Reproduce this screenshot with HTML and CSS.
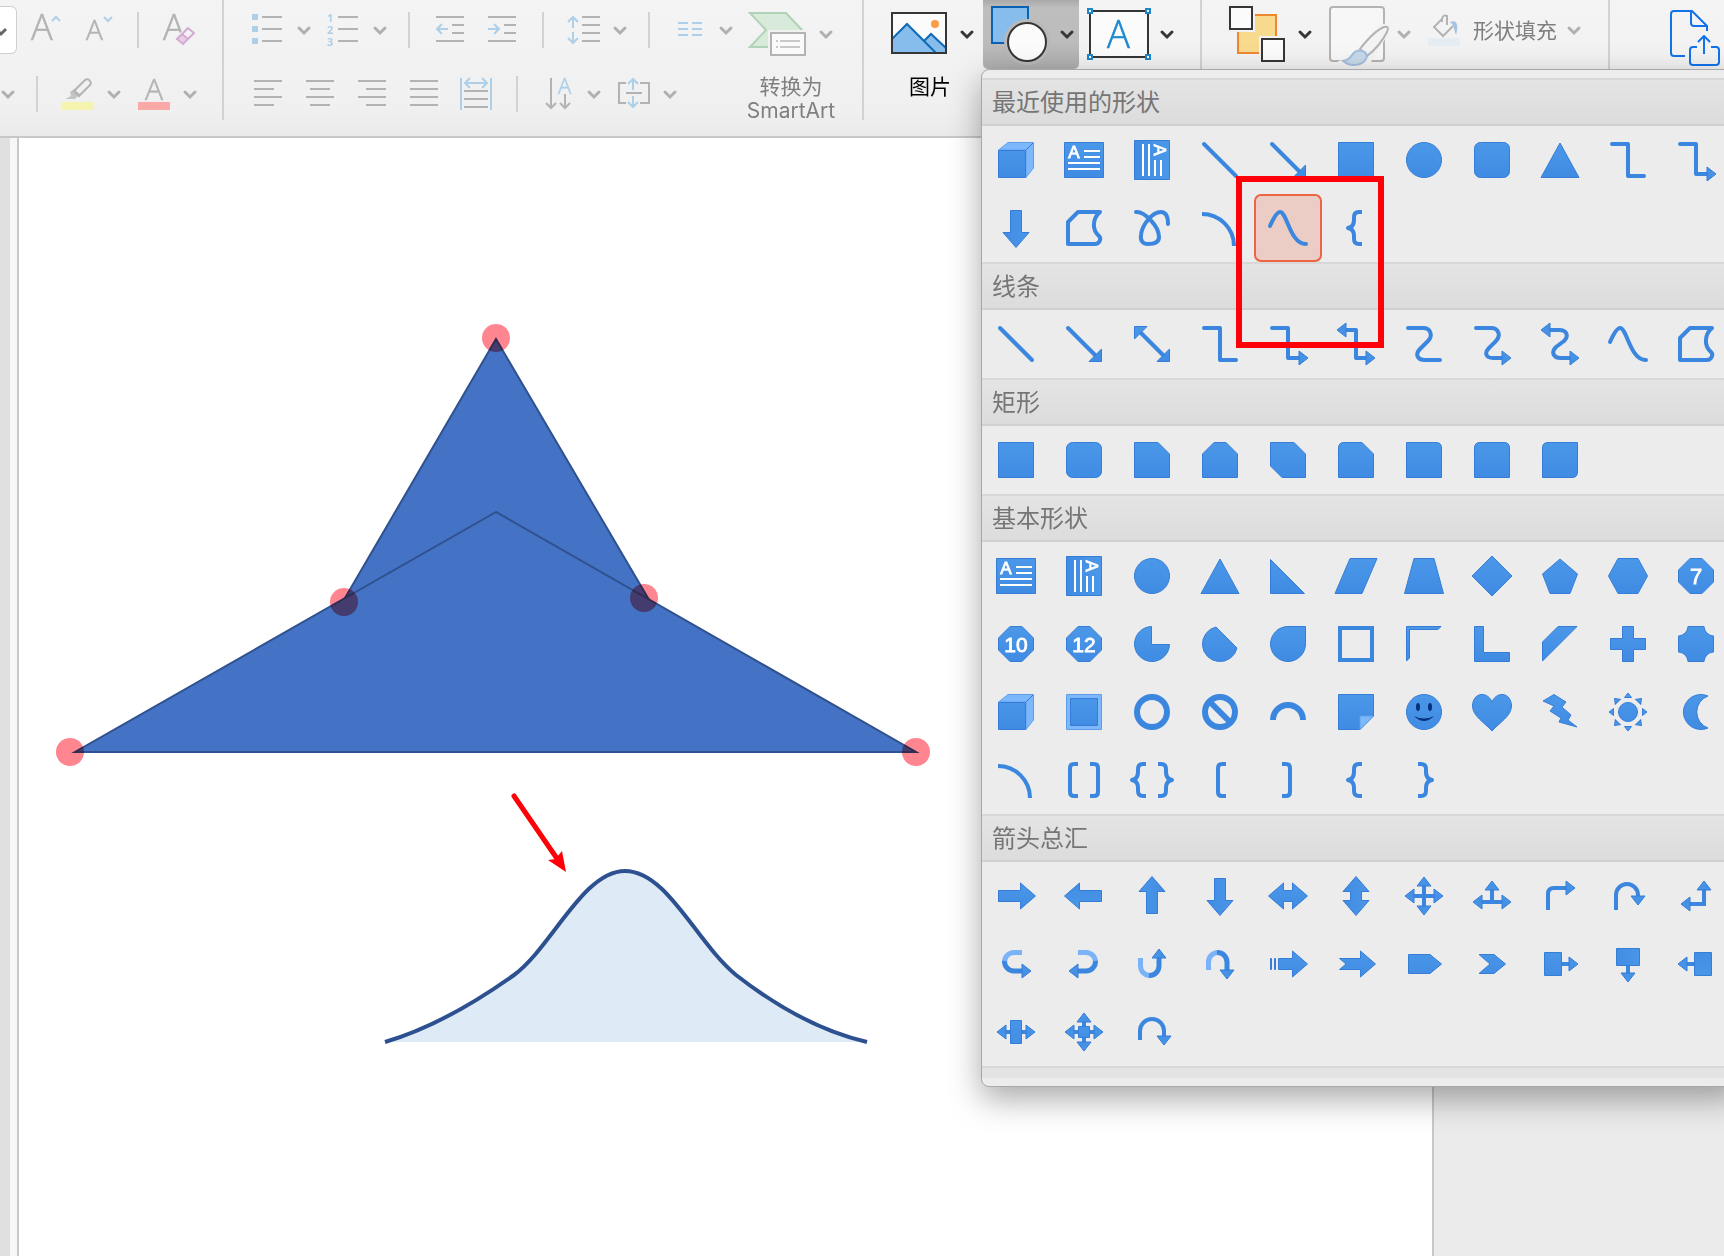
FILE: index.html
```html
<!DOCTYPE html>
<html lang="zh-CN">
<head>
<meta charset="utf-8">
<meta name="viewport" content="width=device-width, initial-scale=1">
<title>演示文稿</title>
<link rel="stylesheet" href="styles.css">
</head>
<body>
<svg class="defs" width="0" height="0" aria-hidden="true">
  <defs>
    <linearGradient id="blue" gradientUnits="userSpaceOnUse" x1="0" y1="-18" x2="0" y2="18"><stop offset="0" stop-color="#4b98e9"/><stop offset="1" stop-color="#408be3"/></linearGradient>
    <path id="head" d="M0 0L-9 -7V7Z"/>
    <path id="chev" d="M-5 -3L0 2L5 -3"/>
    <g id="brace"><path class="ln" d="M6 -16H3Q-2 -16 -2 -11V-8Q-2 -3 -5 -1L-8 0L-5 1Q-2 3 -2 8V11Q-2 16 3 16H6"/></g>
    <g id="bracket"><path class="ln" d="M6 -16H2Q-2 -16 -2 -12V12Q-2 16 2 16H6"/></g>
    <g id="cube"><path class="lt" d="M-17.500 -10L-8 -17.500H17.500V8L10 17.500V-10Z"/><path d="M-17.500 -9.500H9.500V17.500H-17.500Z"/><path class="edge" d="M10 -10L17 -17"/></g>
    <g id="textbox"><path d="M-19.500 -17.500H19.500V17.500H-19.500Z"/><path class="wh" d="M0 -9H16M0 -3H16M-16 3H16M-16 9H16"/><text class="num" x="-10" y="-2" font-size="17">A</text></g>
    <g id="turn"><path class="ln bold ltl" d="M6 -11.500H-2A9.500 9.500 0 0 0 -11.500 -2"/><path class="ln bold" d="M-11.500 -3A9.500 9.500 0 0 0 -2 7H6"/><use href="#head" x="15" y="7"/></g>
    <g id="callout"><path d="M-15.500 -11.500H1.500V11.500H-15.500Z"/><path class="ln" d="M2 0H10"/><use href="#head" x="18"/></g>
    <path id="ray" d="M0 -19L3.500 -14.500H-3.500Z"/>
    <path id="oct" d="M-6 -17.500H6L17.500 -6V6L6 17.500H-6L-17.500 6V-6Z"/>
    <path id="arrow" d="M-17.500 -5.500H4.500V-13L19.500 0L4.500 13V5.500H-17.500Z"/>
    <path id="arrow2" d="M-19.500 0L-4.500 -13V-5.500H4.500V-13L19.500 0L4.500 13V5.500H-4.500V13Z"/>
    <path id="curve" class="ln rd" d="M-18 -2C-14 -11 -11 -16 -8 -16C-1 -16 2 16 18 16"/>
    <path id="freeform" class="ln" d="M-16 -6L-6 -16H16C8 -9 8 2 15 8C18 11 15 16 11 16H-16Z"/>
    <path id="arc" class="ln" d="M-18 -14A32 32 0 0 1 14 18"/>
    <g id="line-arrow"><path class="ln rd" d="M-16 -16L12 12"/><path d="M17.500 5V17.500H5Z"/></g>
    <g id="elbow-arrow"><path class="ln rd" d="M-16 -16H0V14H11"/><use href="#head" x="20" y="14"/></g>
    <path id="elbow" class="ln rd" d="M-16 -16H0V16H16"/>
  </defs>
</svg>

<header class="ribbon">
  <div class="group rows">
    <div class="row">
      <select class="size" aria-label="字号"><option>18</option></select>
      <button class="tool" aria-label="增大字号"><svg width="56" height="60" viewBox="16 0 56 60"><text class="glyph" x="30" y="40" font-size="36">A</text><path class="b" d="M51 21L55 17L59 21"/></svg></button>
      <button class="tool" aria-label="减小字号"><svg width="50" height="60" viewBox="72 0 50 60"><text class="glyph" x="85" y="40" font-size="28">A</text><path class="b" d="M103 17L107 21L111 17"/></svg></button>
      <span class="sep"></span>
      <button class="tool" aria-label="清除格式"><svg width="50" height="60" viewBox="152 0 50 60"><text class="glyph" x="162" y="40" font-size="36">A</text><path class="plate" d="M174 38L187 25L196 34L183 47Z"/><path d="M176 39L181 34L187 40L182 45Z" fill="#e6cfe6"/><path d="M176 39L187 28L193 33L182 44Z M181 34L187 39" fill="none" stroke="#d5a9d6" stroke-width="2"/></svg></button>
    </div>
    <div class="row">
      <button class="tool" aria-label="更多"><svg width="22" height="60" viewBox="-6 -31 22 60"><use class="c" href="#chev" x="2"/></svg></button>
      <span class="sep"></span>
      <button class="tool" aria-label="突出显示"><svg width="48" height="60" viewBox="52 64 48 60"><path d="M62 102H94V110H62Z" fill="#f5f3b0"/><path d="M65 99L71 96L70 92L74 89L80 94L75 99Z" fill="#c4c4c4"/><path class="g" d="M74 91L85 80Q88 78 90 81Q92 84 89 86L79 96Z"/></svg></button>
      <button class="tool" aria-label="突出显示颜色"><svg width="28" height="60" viewBox="-14 -31 28 60"><use class="c" href="#chev"/></svg></button>
      <button class="tool" aria-label="字体颜色"><svg width="48" height="60" viewBox="128 64 48 60"><path d="M138 102H170V110H138Z" fill="#fba9a7"/><text class="glyph" x="145" y="100" font-size="30">A</text></svg></button>
      <button class="tool" aria-label="字体颜色选项"><svg width="28" height="60" viewBox="-14 -31 28 60"><use class="c" href="#chev"/></svg></button>
    </div>
  </div>
  <div class="group rows paragraph">
    <div class="row">
      <button class="tool" aria-label="项目符号"><svg width="48" height="60" viewBox="242 0 48 60"><path d="M252 14h6v6h-6zM252 26h6v6h-6zM252 38h6v6h-6z" fill="#aecfe8"/><path class="g" d="M262 17H282M262 29H282M262 41H282"/></svg></button>
      <button class="tool" aria-label="项目符号选项"><svg width="28" height="60" viewBox="-14 -31 28 60"><use class="c" href="#chev"/></svg></button>
      <button class="tool" aria-label="编号"><svg width="48" height="60" viewBox="318 0 48 60"><g class="digits"><text x="327" y="22">1</text><text x="327" y="34">2</text><text x="327" y="46">3</text></g><path class="g" d="M338 17H358M338 29H358M338 41H358"/></svg></button>
      <button class="tool" aria-label="编号选项"><svg width="28" height="60" viewBox="-14 -31 28 60"><use class="c" href="#chev"/></svg></button>
      <span class="sep"></span>
      <button class="tool" aria-label="减少缩进"><svg width="52" height="60" viewBox="424 0 52 60"><path class="g" d="M436 17H464M452 25H464M452 33H464M436 41H464"/><path class="b" d="M448 29H437M442 24L437 29L442 34"/></svg></button>
      <button class="tool" aria-label="增加缩进"><svg width="52" height="60" viewBox="476 0 52 60"><path class="g" d="M488 17H516M504 25H516M504 33H516M488 41H516"/><path class="b" d="M488 29H499M494 24L499 29L494 34"/></svg></button>
      <span class="sep"></span>
      <button class="tool" aria-label="行距"><svg width="48" height="60" viewBox="558 0 48 60"><path class="g" d="M582 17H600M582 25H600M582 33H600M582 41H600"/><path class="b" d="M573 28V17M568 22L573 17L578 22M573 32V43M568 38L573 43L578 38"/></svg></button>
      <button class="tool" aria-label="行距选项"><svg width="28" height="60" viewBox="-14 -31 28 60"><use class="c" href="#chev"/></svg></button>
      <span class="sep"></span>
      <button class="tool" aria-label="分栏"><svg width="48" height="60" viewBox="664 0 48 60"><path class="b" d="M678 23H688M692 23H702M678 29H688M692 29H702M678 35H688M692 35H702"/></svg></button>
      <button class="tool" aria-label="分栏选项"><svg width="28" height="60" viewBox="-14 -31 28 60"><use class="c" href="#chev"/></svg></button>
    </div>
    <div class="row">
      <button class="tool" aria-label="左对齐"><svg width="52" height="60" viewBox="242 64 52 60"><path class="g" d="M254 81H282M254 89H274M254 97H282M254 105H274"/></svg></button>
      <button class="tool" aria-label="居中"><svg width="52" height="60" viewBox="294 64 52 60"><path class="g" d="M306 81H334M310 89H330M306 97H334M310 105H330"/></svg></button>
      <button class="tool" aria-label="右对齐"><svg width="52" height="60" viewBox="346 64 52 60"><path class="g" d="M358 81H386M366 89H386M358 97H386M366 105H386"/></svg></button>
      <button class="tool" aria-label="两端对齐"><svg width="52" height="60" viewBox="398 64 52 60"><path class="g" d="M410 81H438M410 89H438M410 97H438M410 105H438"/></svg></button>
      <button class="tool" aria-label="分散对齐"><svg width="52" height="60" viewBox="450 64 52 60"><path class="g" d="M464 91H488M464 99H488M464 107H488"/><path class="b" d="M461 78V110M491 78V110M466 83H486M470 78L465 83L470 88M482 78L487 83L482 88"/></svg></button>
      <span class="sep"></span>
      <button class="tool" aria-label="文字方向"><svg width="48" height="60" viewBox="532 64 48 60"><path class="g" d="M551 78V108M546 103L551 108L556 103M565 94V108M560 103L565 108L570 103"/><text class="glyph sky" x="558" y="94" font-size="22">A</text></svg></button>
      <button class="tool" aria-label="文字方向选项"><svg width="28" height="60" viewBox="-14 -31 28 60"><use class="c" href="#chev"/></svg></button>
      <button class="tool" aria-label="对齐文本"><svg width="48" height="60" viewBox="608 64 48 60"><path class="g" d="M626 83H619V103H626M640 83H649V103H640M626 93H642"/><path class="b" d="M633 90V79M628 84L633 79L638 84M633 96V107M628 102L633 107L638 102"/></svg></button>
      <button class="tool" aria-label="对齐文本选项"><svg width="28" height="60" viewBox="-14 -31 28 60"><use class="c" href="#chev"/></svg></button>
    </div>
  </div>
  <div class="group smartart">
    <button class="big muted"><svg width="102" height="75" viewBox="740 0 102 75"><path d="M750 13H786L802 30L786 47H750L766 30Z" fill="#d8ebda" stroke="#b0d2b6" stroke-width="2"/><path class="plate" d="M768 30H808V58H768Z"/><path d="M771 33H805V55H771Z" fill="#fafafa" stroke="#b3b3b3" stroke-width="2"/><path d="M780 41H800M780 47H800M776 41h2M776 47h2" stroke="#c8c8c8" stroke-width="2"/><use class="c" href="#chev" x="826" y="35"/></svg>转换为<br>SmartArt</button>
  </div>
  <div class="group insert">
    <button class="big"><svg width="92" height="75" viewBox="884 0 92 75"><path d="M892 13H946V53H892Z" fill="#fbfbfb"/><path d="M892 39L907 24L936 53H892Z" fill="#86bdec"/><path d="M924 41L931 34L946 48V53H936Z" fill="#86bdec"/><path d="M892 39L907 24L936 53M924 41L931 34L946 48" fill="none" stroke="#0f6ab8" stroke-width="2"/><circle cx="935" cy="24" r="4" fill="#fb9b45"/><path class="d" d="M892 13H946V53H892Z"/><use class="c k" href="#chev" x="967" y="35"/></svg>图片</button>
    <div class="dropdown">
      <button class="tool open" aria-label="形状" aria-expanded="true"><svg width="96" height="69" viewBox="983 0 96 69"><path d="M992 7H1028V43H992Z" fill="#86bdec" stroke="#0a62b3" stroke-width="2"/><circle cx="1027" cy="42" r="23" fill="#b9b9b9"/><circle cx="1027" cy="42" r="19" fill="#fbfbfb" stroke="#363636" stroke-width="2"/><use class="c k" href="#chev" x="1067" y="35"/></svg></button>
      <div class="menu">
        <h2>最近使用的形状</h2>
        <div class="grid">
          <button aria-label="立方体"><svg viewBox="-34 -34 68 68"><use href="#cube"/></svg></button>
          <button aria-label="文本框"><svg viewBox="-34 -34 68 68"><use href="#textbox"/></svg></button>
          <button aria-label="竖排文本框"><svg viewBox="-34 -34 68 68"><use href="#textbox" transform="rotate(90)"/></svg></button>
          <button aria-label="直线"><svg viewBox="-34 -34 68 68"><path class="ln rd" d="M-16 -16L16 16"/></svg></button>
          <button aria-label="箭头"><svg viewBox="-34 -34 68 68"><use href="#line-arrow"/></svg></button>
          <button aria-label="矩形"><svg viewBox="-34 -34 68 68"><path d="M-17.500 -17.500H17.500V17.500H-17.500Z"/></svg></button>
          <button aria-label="椭圆"><svg viewBox="-34 -34 68 68"><circle r="17.500"/></svg></button>
          <button aria-label="圆角矩形"><svg viewBox="-34 -34 68 68"><rect x="-17.500" y="-17.500" width="35" height="35" rx="6"/></svg></button>
          <button aria-label="三角形"><svg viewBox="-34 -34 68 68"><path d="M0 -17L19 17.500H-19Z"/></svg></button>
          <button aria-label="肘形连接符"><svg viewBox="-34 -34 68 68"><use href="#elbow"/></svg></button>
          <button aria-label="肘形箭头"><svg viewBox="-34 -34 68 68"><use href="#elbow-arrow"/></svg></button>
          <button aria-label="下箭头"><svg viewBox="-34 -34 68 68"><use href="#arrow" transform="rotate(90)"/></svg></button>
          <button aria-label="任意多边形"><svg viewBox="-34 -34 68 68"><use href="#freeform"/></svg></button>
          <button aria-label="自由曲线"><svg viewBox="-34 -34 68 68"><path class="ln rd" d="M-16 -16C-8 -17 7 -2 7 9C7 14 2 16 -4 16C-9 16 -12 13 -11 7C-10 -3 0 -16 9 -16C15 -16 16 -10 16 -4"/></svg></button>
          <button aria-label="弧形"><svg viewBox="-34 -34 68 68"><use href="#arc"/></svg></button>
          <button class="selected" aria-label="曲线"><svg viewBox="-34 -34 68 68"><use href="#curve"/></svg></button>
          <button aria-label="左大括号"><svg viewBox="-34 -34 68 68"><use href="#brace"/></svg></button>
        </div>
        <h2>线条</h2>
        <div class="grid">
          <button aria-label="直线"><svg viewBox="-34 -34 68 68"><path class="ln rd" d="M-16 -16L16 16"/></svg></button>
          <button aria-label="箭头"><svg viewBox="-34 -34 68 68"><use href="#line-arrow"/></svg></button>
          <button aria-label="双箭头"><svg viewBox="-34 -34 68 68"><path class="ln" d="M-12 -12L12 12"/><path d="M17.500 5V17.500H5ZM-17.500 -5V-17.500H-5Z"/></svg></button>
          <button aria-label="肘形连接符"><svg viewBox="-34 -34 68 68"><use href="#elbow"/></svg></button>
          <button aria-label="肘形箭头"><svg viewBox="-34 -34 68 68"><use href="#elbow-arrow"/></svg></button>
          <button aria-label="肘形双箭头"><svg viewBox="-34 -34 68 68"><path class="ln" d="M-11 -14H0V14H11"/><use href="#head" x="19" y="14"/><use href="#head" x="19" y="14" transform="rotate(180)"/></svg></button>
          <button aria-label="曲线连接符"><svg viewBox="-34 -34 68 68"><path class="ln rd" d="M-16 -16H-1C7 -16 9 -8 4 -3L-4 5C-9 10 -7 16 1 16H16"/></svg></button>
          <button aria-label="曲线箭头"><svg viewBox="-34 -34 68 68"><path class="ln rd" d="M-16 -16H-1C7 -16 9 -8 4 -3L-3 4C-8 9 -6 14 1 14H11"/><use href="#head" x="19" y="14"/></svg></button>
          <button aria-label="曲线双箭头"><svg viewBox="-34 -34 68 68"><path class="ln" d="M-11 -14H-1C7 -14 9 -8 4 -3L-4 3C-9 8 -7 14 1 14H11"/><use href="#head" x="19" y="14"/><use href="#head" x="19" y="14" transform="rotate(180)"/></svg></button>
          <button aria-label="曲线"><svg viewBox="-34 -34 68 68"><use href="#curve"/></svg></button>
          <button aria-label="任意多边形"><svg viewBox="-34 -34 68 68"><use href="#freeform"/></svg></button>
        </div>
        <h2>矩形</h2>
        <div class="grid">
          <button aria-label="矩形"><svg viewBox="-34 -34 68 68"><path d="M-17.500 -17.500H17.500V17.500H-17.500Z"/></svg></button>
          <button aria-label="圆角矩形"><svg viewBox="-34 -34 68 68"><rect x="-17.500" y="-17.500" width="35" height="35" rx="6"/></svg></button>
          <button aria-label="剪去单角"><svg viewBox="-34 -34 68 68"><path d="M-17.500 -17.500H6L17.500 -6V17.500H-17.500Z"/></svg></button>
          <button aria-label="剪去同侧角"><svg viewBox="-34 -34 68 68"><path d="M-17.500 -6L-6 -17.500H6L17.500 -6V17.500H-17.500Z"/></svg></button>
          <button aria-label="剪去对角"><svg viewBox="-34 -34 68 68"><path d="M-17.500 -17.500H6L17.500 -6V17.500H-6L-17.500 6Z"/></svg></button>
          <button aria-label="一圆一剪"><svg viewBox="-34 -34 68 68"><path d="M-17.500 -12Q-17.500 -17.500 -12 -17.500H6L17.500 -6V17.500H-17.500Z"/></svg></button>
          <button aria-label="单圆角"><svg viewBox="-34 -34 68 68"><path d="M-17.500 -17.500H12Q17.500 -17.500 17.500 -12V17.500H-17.500Z"/></svg></button>
          <button aria-label="同侧圆角"><svg viewBox="-34 -34 68 68"><path d="M-17.500 -12Q-17.500 -17.500 -12 -17.500H12Q17.500 -17.500 17.500 -12V17.500H-17.500Z"/></svg></button>
          <button aria-label="对角圆角"><svg viewBox="-34 -34 68 68"><path d="M-17.500 -12Q-17.500 -17.500 -12 -17.500H17.500V12Q17.500 17.500 12 17.500H-17.500Z"/></svg></button>
        </div>
        <h2>基本形状</h2>
        <div class="grid">
          <button aria-label="文本框"><svg viewBox="-34 -34 68 68"><use href="#textbox"/></svg></button>
          <button aria-label="竖排文本框"><svg viewBox="-34 -34 68 68"><use href="#textbox" transform="rotate(90)"/></svg></button>
          <button aria-label="椭圆"><svg viewBox="-34 -34 68 68"><circle r="17.500"/></svg></button>
          <button aria-label="三角形"><svg viewBox="-34 -34 68 68"><path d="M0 -17L19 17.500H-19Z"/></svg></button>
          <button aria-label="直角三角形"><svg viewBox="-34 -34 68 68"><path d="M-17.500 -16.500L16.500 17.500H-17.500Z"/></svg></button>
          <button aria-label="平行四边形"><svg viewBox="-34 -34 68 68"><path d="M-6 -17.500H21L6 17.500H-21Z"/></svg></button>
          <button aria-label="梯形"><svg viewBox="-34 -34 68 68"><path d="M-10 -17.500H10L19.500 17.500H-19.500Z"/></svg></button>
          <button aria-label="菱形"><svg viewBox="-34 -34 68 68"><path d="M0 -20L20 0L0 20L-20 0Z"/></svg></button>
          <button aria-label="五边形"><svg viewBox="-34 -34 68 68"><path d="M0 -17L17.500 -2L10 17.500H-10L-17.500 -2Z"/></svg></button>
          <button aria-label="六边形"><svg viewBox="-34 -34 68 68"><path d="M-10 -17.500H10L19.500 0L10 17.500H-10L-19.500 0Z"/></svg></button>
          <button aria-label="七边形"><svg viewBox="-34 -34 68 68"><use href="#oct"/><text class="num" y="8" font-size="22">7</text></svg></button>
          <button aria-label="十边形"><svg viewBox="-34 -34 68 68"><use href="#oct"/><text class="num" y="8" font-size="21">10</text></svg></button>
          <button aria-label="十二边形"><svg viewBox="-34 -34 68 68"><use href="#oct"/><text class="num" y="8" font-size="21">12</text></svg></button>
          <button aria-label="饼形"><svg viewBox="-34 -34 68 68"><path d="M-.5 -17.500V.5H17.500A17.500 17.500 0 1 1 -.5 -17.500Z"/></svg></button>
          <button aria-label="弦形"><svg viewBox="-34 -34 68 68"><path d="M-4 -17L17 4A17.500 17.500 0 1 1 -4 -17Z"/></svg></button>
          <button aria-label="泪滴形"><svg viewBox="-34 -34 68 68"><path d="M0 -17.500H17.500V0A17.500 17.500 0 1 1 0 -17.500Z"/></svg></button>
          <button aria-label="图文框"><svg viewBox="-34 -34 68 68"><path class="ln sq" d="M-16 -16H16V16H-16Z"/></svg></button>
          <button aria-label="半闭框"><svg viewBox="-34 -34 68 68"><path d="M-17.500 -17.500H17L14 -14.500H-14.500V14L-17.500 17Z"/></svg></button>
          <button aria-label="L 形"><svg viewBox="-34 -34 68 68"><path d="M-17.500 -17.500H-8.500V8.500H17.500V17.500H-17.500Z"/></svg></button>
          <button aria-label="斜纹"><svg viewBox="-34 -34 68 68"><path d="M-17.500 -2L-2 -17.500H17L-17.500 17Z"/></svg></button>
          <button aria-label="十字形"><svg viewBox="-34 -34 68 68"><path d="M-5.500 -17.500H5.500V-5.500H17.500V5.500H5.500V17.500H-5.500V5.500H-17.500V-5.500H-5.500Z"/></svg></button>
          <button aria-label="缺角矩形"><svg viewBox="-34 -34 68 68"><path d="M-8 -17.500H8A10 10 0 0 0 17.500 -8V8A10 10 0 0 0 8 17.500H-8A10 10 0 0 0 -17.500 8V-8A10 10 0 0 0 -8 -17.500Z"/></svg></button>
          <button aria-label="立方体"><svg viewBox="-34 -34 68 68"><use href="#cube"/></svg></button>
          <button aria-label="棱台"><svg viewBox="-34 -34 68 68"><path class="lt" d="M-17.500 -17.500H17.500V17.500H-17.500Z"/><path d="M-13.500 -13.500H13.500V13.500H-13.500Z"/></svg></button>
          <button aria-label="圆环"><svg viewBox="-34 -34 68 68"><circle class="ln thick" r="15"/></svg></button>
          <button aria-label="禁止符"><svg viewBox="-34 -34 68 68"><circle class="ln thick" r="15"/><path class="ln thick" d="M-9 -9L9 9"/></svg></button>
          <button aria-label="空心弧"><svg viewBox="-34 -34 68 68"><path class="ln thick" d="M-15 8A15 15 0 0 1 15 8"/></svg></button>
          <button aria-label="折角形"><svg viewBox="-34 -34 68 68"><path d="M-17.500 -17.500H17.500V4L4 17.500H-17.500Z"/><path class="lt" d="M4 17.500V4H17.500Z"/></svg></button>
          <button aria-label="笑脸"><svg viewBox="-34 -34 68 68"><circle r="17.500"/><path class="face" d="M-10 4Q0 14 10 4Q0 9 -10 4Z"/><ellipse class="face" cx="-6" cy="-5" rx="2" ry="4"/><ellipse class="face" cx="6" cy="-5" rx="2" ry="4"/></svg></button>
          <button aria-label="心形"><svg viewBox="-34 -34 68 68"><path d="M0 -10C2 -15 6 -17.500 10 -17.500C16 -17.500 19.500 -12 19.500 -6C19.500 4 7 11 0 19C-7 11 -19.500 4 -19.500 -6C-19.500 -12 -16 -17.500 -10 -17.500C-6 -17.500 -2 -15 0 -10Z"/></svg></button>
          <button aria-label="闪电形"><svg viewBox="-34 -34 68 68"><path d="M-6 -17.500L6 -10L2 -5L11 3L8 8L17 15L-1 10L1 6L-10 -1L-6 -6L-17 -11Z"/></svg></button>
          <button aria-label="太阳形"><svg viewBox="-34 -34 68 68"><circle r="9.500"/><use href="#ray"/><use href="#ray" transform="rotate(45)"/><use href="#ray" transform="rotate(90)"/><use href="#ray" transform="rotate(135)"/><use href="#ray" transform="rotate(180)"/><use href="#ray" transform="rotate(225)"/><use href="#ray" transform="rotate(270)"/><use href="#ray" transform="rotate(315)"/></svg></button>
          <button aria-label="新月形"><svg viewBox="-34 -34 68 68"><path d="M12 -16A17.500 17.500 0 1 0 12 16A17 17 0 0 1 12 -16Z"/></svg></button>
          <button aria-label="弧形"><svg viewBox="-34 -34 68 68"><use href="#arc"/></svg></button>
          <button aria-label="双括号"><svg viewBox="-34 -34 68 68"><use href="#bracket" x="-12"/><use href="#bracket" x="-12" transform="rotate(180)"/></svg></button>
          <button aria-label="双大括号"><svg viewBox="-34 -34 68 68"><use href="#brace" x="-12"/><use href="#brace" x="-12" transform="rotate(180)"/></svg></button>
          <button aria-label="左中括号"><svg viewBox="-34 -34 68 68"><use href="#bracket"/></svg></button>
          <button aria-label="右中括号"><svg viewBox="-34 -34 68 68"><use href="#bracket" transform="rotate(180)"/></svg></button>
          <button aria-label="左大括号"><svg viewBox="-34 -34 68 68"><use href="#brace"/></svg></button>
          <button aria-label="右大括号"><svg viewBox="-34 -34 68 68"><use href="#brace" transform="rotate(180)"/></svg></button>
        </div>
        <h2>箭头总汇</h2>
        <div class="grid">
          <button aria-label="右箭头"><svg viewBox="-34 -34 68 68"><use href="#arrow"/></svg></button>
          <button aria-label="左箭头"><svg viewBox="-34 -34 68 68"><use href="#arrow" transform="rotate(180)"/></svg></button>
          <button aria-label="上箭头"><svg viewBox="-34 -34 68 68"><use href="#arrow" transform="rotate(-90)"/></svg></button>
          <button aria-label="下箭头"><svg viewBox="-34 -34 68 68"><use href="#arrow" transform="rotate(90)"/></svg></button>
          <button aria-label="左右箭头"><svg viewBox="-34 -34 68 68"><use href="#arrow2"/></svg></button>
          <button aria-label="上下箭头"><svg viewBox="-34 -34 68 68"><use href="#arrow2" transform="rotate(90)"/></svg></button>
          <button aria-label="十字箭头"><svg viewBox="-34 -34 68 68"><path class="ln" d="M-11 0H11M0 -11V11"/><use href="#head" x="19"/><use href="#head" x="19" transform="rotate(90)"/><use href="#head" x="19" transform="rotate(180)"/><use href="#head" x="19" transform="rotate(270)"/></svg></button>
          <button aria-label="丁字箭头"><svg viewBox="-34 -34 68 68"><path class="ln" d="M-11 6H11M0 -7V6"/><use href="#head" x="19" y="6"/><use href="#head" x="19" y="-6" transform="rotate(180)"/><use href="#head" x="15" transform="rotate(-90)"/></svg></button>
          <button aria-label="圆角右箭头"><svg viewBox="-34 -34 68 68"><path class="ln" d="M-12 14V-2Q-12 -8 -6 -8H7"/><use href="#head" x="15" y="-8"/></svg></button>
          <button aria-label="手杖形箭头"><svg viewBox="-34 -34 68 68"><path class="ln" d="M-12 14V-1A11 11 0 0 1 10 -1V1"/><use href="#head" x="9" y="-10" transform="rotate(90)"/></svg></button>
          <button aria-label="直角双向箭头"><svg viewBox="-34 -34 68 68"><path class="ln sq" d="M-7 8H8V-7"/><use href="#head" x="15" y="-8" transform="rotate(180)"/><use href="#head" x="15" y="8" transform="rotate(-90)"/></svg></button>
          <button aria-label="左弧形箭头"><svg viewBox="-34 -34 68 68"><use href="#turn"/></svg></button>
          <button aria-label="右弧形箭头"><svg viewBox="-34 -34 68 68"><use href="#turn" transform="scale(-1 1)"/></svg></button>
          <button aria-label="下弧形箭头"><svg viewBox="-34 -34 68 68"><use href="#turn" transform="rotate(-90)"/></svg></button>
          <button aria-label="上弧形箭头"><svg viewBox="-34 -34 68 68"><use href="#turn" transform="scale(1 -1) rotate(-90)"/></svg></button>
          <button aria-label="虚尾箭头"><svg viewBox="-34 -34 68 68"><path d="M-9.500 -5.500H4.500V-13L19.500 0L4.500 13V5.500H-9.500ZM-17.500 -5.500h1v11h-1zM-13.500 -5.500h1v11h-1z"/></svg></button>
          <button aria-label="燕尾形箭头"><svg viewBox="-34 -34 68 68"><path d="M-16.500 -5.500H4.500V-13L19.500 0L4.500 13V5.500H-16.500L-10 0Z"/></svg></button>
          <button aria-label="五边形箭头"><svg viewBox="-34 -34 68 68"><path d="M-15.500 -9.500H6L17.500 0L6 9.500H-15.500Z"/></svg></button>
          <button aria-label="V 形"><svg viewBox="-34 -34 68 68"><path d="M-13 -9.500H2L13.500 0L2 9.500H-13L-2 0Z"/></svg></button>
          <button aria-label="右箭头标注"><svg viewBox="-34 -34 68 68"><use href="#callout"/></svg></button>
          <button aria-label="下箭头标注"><svg viewBox="-34 -34 68 68"><use href="#callout" transform="rotate(90)"/></svg></button>
          <button aria-label="左箭头标注"><svg viewBox="-34 -34 68 68"><use href="#callout" transform="rotate(180)"/></svg></button>
          <button aria-label="左右箭头标注"><svg viewBox="-34 -34 68 68"><path class="ln" d="M-11 0H11"/><path d="M-5.500 -11.500H5.500V11.500H-5.500Z"/><use href="#head" x="19"/><use href="#head" x="19" transform="rotate(180)"/></svg></button>
          <button aria-label="十字箭头标注"><svg viewBox="-34 -34 68 68"><path class="ln" d="M-11 0H11M0 -11V11"/><path d="M-5.500 -5.500H5.500V5.500H-5.500Z"/><use href="#head" x="19"/><use href="#head" x="19" transform="rotate(90)"/><use href="#head" x="19" transform="rotate(180)"/><use href="#head" x="19" transform="rotate(270)"/></svg></button>
          <button aria-label="环形箭头"><svg viewBox="-34 -34 68 68"><path class="ln" d="M-12 8V-1A11 11 0 0 1 12 -1V5"/><use href="#head" x="13" y="-12" transform="rotate(90)"/></svg></button>
        </div>
        <div class="next"></div>
        <div class="marker"></div>
      </div>
    </div>
    <button class="tool" aria-label="文本框"><svg width="108" height="69" viewBox="1079 0 108 69"><path d="M1090 11H1148V57H1090Z" fill="#fbfbfb" stroke="#363636" stroke-width="2"/><path d="M1088 9h4v4h-4zM1146 9h4v4h-4zM1088 55h4v4h-4zM1146 55h4v4h-4z" fill="#fff" stroke="#1e86cc" stroke-width="2"/><text class="glyph azure" x="1107" y="48" font-size="38">A</text><use class="c k" href="#chev" x="1167" y="35"/></svg></button>
  </div>
  <div class="group arrange">
    <button class="tool" aria-label="排列"><svg width="108" height="69" viewBox="1215 0 108 69"><path d="M1238 15H1276V53H1238Z" fill="#f8da8e" stroke="#ef8731" stroke-width="2"/><path class="plate" d="M1226 4H1255V32H1226ZM1259 36H1288V64H1259Z"/><path d="M1230 7H1252V29H1230ZM1262 39H1284V61H1262Z" fill="#fbfbfb" stroke="#363636" stroke-width="2"/><use class="c k" href="#chev" x="1305" y="35"/></svg></button>
    <button class="tool" aria-label="快速样式"><svg width="97" height="69" viewBox="1323 0 97 69"><rect x="1330" y="7" width="54" height="54" rx="3" fill="#f7f7f7" stroke="#b3b3b3" stroke-width="2"/><path d="M1358 52L1381 27Q1389 24 1386 33L1368 62H1342Z" fill="#f3f3f3" stroke="#f3f3f3" stroke-width="5"/><path class="g thin" d="M1360 49Q1374 31 1384 27Q1390 26 1387 32Q1380 46 1367 56Z"/><path d="M1343 61C1353 60 1351 52 1357 51C1363 49 1369 54 1366 59C1362 66 1350 67 1343 61Z" fill="#c6d9ea" stroke="#a3bddb" stroke-width="2"/><use class="c" href="#chev" x="1404" y="35"/></svg></button>
    <button class="tool fill"><svg width="53" height="62" viewBox="1420 0 53 62"><path d="M1428 38H1460V46H1428Z" fill="#e5edf2"/><path d="M1450 22C1457 19 1459 25 1456 35C1453 28 1455 26 1450 22Z" fill="#a8c3e2"/><path class="g thin" d="M1442 19L1434 27L1443 36L1453 26M1442 22V19Q1443 14 1447 16V25"/></svg>形状填充<svg width="32" height="62" viewBox="-17 -31 32 62"><use class="c" href="#chev"/></svg></button>
  </div>
  <div class="group share">
    <button class="tool" aria-label="共享"><svg width="60" height="69" viewBox="1664 0 60 69"><g fill="none" stroke="#1272ea" stroke-width="2" stroke-linejoin="round"><path d="M1685 56H1674Q1671 56 1671 53V14Q1671 11 1674 11H1692L1707 26V31M1691 11V23Q1691 26 1694 26H1707"/><path d="M1697 47H1693Q1690 47 1690 50V62Q1690 65 1693 65H1716Q1719 65 1719 62V50Q1719 47 1716 47H1711M1704 54V36M1698 42L1704 36L1710 42"/></g></svg></button>
  </div>
</header>

<main class="work">
  <div class="thumbs"></div>
  <div class="slide">
    <svg width="1413" height="1110" viewBox="19 138 1413 1110" role="img" aria-label="三角形与曲线图形">
      <g fill="#4472c4" stroke="#2f528f" stroke-width="2">
        <path d="M496 339L345 598H648Z"/>
        <path d="M496 512L75 752H916Z"/>
      </g>
      <g class="dots"><circle cx="496" cy="338" r="14"/><circle cx="344" cy="602" r="14"/><circle cx="644" cy="598" r="14"/><circle cx="70" cy="752" r="14"/><circle cx="916" cy="752" r="14"/></g>
      <path d="M385 1042C433 1028 476 1002 514 975C552 947 583 871 625 871C667 871 696 942 736 975C772 1003 815 1030 867 1042" fill="#deebf6" stroke="#2d5190" stroke-width="4"/>
      <path d="M514 796L558 860" stroke="#ff0008" stroke-width="5" stroke-linecap="round"/>
      <path d="M566 872L548 860L556 859L557 857L562 851Z" fill="#ff0008"/>
    </svg>
  </div>
  <aside class="pane"></aside>
</main>
</body>
</html>
```
FILE: styles.css
```css
* { box-sizing: border-box; }

html { overflow-x: clip; }

body {
  margin: 0;
  min-height: 100vh;
  display: flex;
  flex-direction: column;
  overflow-x: clip;
  background: #ebebeb;
  color: #000;
  font-family: Inter, "Noto Sans CJK SC", sans-serif;
}

button {
  margin: 0;
  padding: 0;
  border: 0;
  background: none;
  color: inherit;
  font: inherit;
}

svg { display: block; flex: none; }

.defs { position: absolute; }

/* Ribbon */
.ribbon {
  position: relative;
  z-index: 1;
  display: flex;
  align-items: flex-start;
  height: 138px;
  border-bottom: 2px solid #c8c8c8;
  background: linear-gradient(#f4f4f4, #f0f0f0 80%, #eaeaea);
}

.group {
  display: flex;
  flex: none;
  align-items: flex-start;
  height: 120px;
  border-right: 2px solid #d2d2d2;
}

.rows { flex-direction: column; gap: 4px; width: 224px; height: 120px; }
.row { display: flex; height: 60px; flex: none; }
.paragraph { width: 516px; padding-left: 18px; border-right: 0; }
.smartart { width: 124px; }
.insert { width: 338px; padding-left: 20px; }
.arrange { width: 408px; padding-left: 13px; }
.share { padding-left: 54px; border-right: 0; }

.tool { display: flex; flex: none; align-items: center; }

.size {
  width: 16px;
  height: 48px;
  margin-top: 6px;
  padding: 0 0 0 16px;
  border: 1px solid #cfcfcf;
  border-left: 0;
  border-radius: 0 6px 6px 0;
  appearance: none;
  background: #fff url("data:image/svg+xml,%3Csvg xmlns='http://www.w3.org/2000/svg' width='14' height='10'%3E%3Cpath d='M2 2L7 7L12 2' fill='none' stroke='%23666' stroke-width='3'/%3E%3C/svg%3E") -6px 20px no-repeat;
}

.sep {
  flex: none;
  width: 2px;
  height: 36px;
  margin: 12px 14px;
  background: #d2d2d2;
}

.big {
  flex: none;
  font-size: 21px;
  line-height: 24px;
  text-align: center;
}

.insert .big { margin-right: 7px; }
.muted, .fill { color: #7f7f7f; }
.fill { font-size: 21px; line-height: 24px; }

.open {
  border-radius: 0 0 5px 5px;
  background: linear-gradient(#a9a9a9, #bebebe 12%, #bcbcbc 60%, #adadad);
}

.g, .b, .d, .c { fill: none; stroke-width: 2; }
.g { stroke: #b3b3b3; }
.b { stroke: #aecfe8; }
.d { stroke: #363636; }
.c { stroke: #b0b0b0; stroke-width: 3; stroke-linecap: round; }
.k { stroke: #363636; }
.plate { fill: #f2f2f2; }

.glyph {
  fill: #b3b3b3;
  stroke: #b3b3b3;
  stroke-width: .6px;
  font-family: "Open Sans", "Noto Sans", sans-serif;
  font-weight: 300;
}
.sky { fill: #aecfe8; stroke: #aecfe8; }
.azure { fill: #1e8ad0; stroke: #1e8ad0; }

.digits {
  fill: #aecfe8;
  font: bold 11px "Open Sans", sans-serif;
}

/* Shape gallery */
.dropdown { position: relative; }

.menu {
  position: absolute;
  top: 100%;
  left: -2px;
  width: 760px;
  padding: 8px 0;
  overflow: hidden;
  border: 1px solid #a8a8a8;
  border-radius: 8px;
  background: #ececec;
  box-shadow: 0 12px 32px rgba(0, 0, 0, .34);
}

.menu h2 {
  height: 48px;
  margin: 0;
  padding: 0 10px;
  border-top: 2px solid #d8d8d8;
  border-bottom: 2px solid #d0d0d0;
  background: linear-gradient(#e4e4e4, #dcdcdc);
  color: #757575;
  font-size: 24px;
  font-weight: 400;
  line-height: 46px;
}

.grid {
  display: grid;
  grid-template-columns: repeat(11, 68px);
  grid-auto-rows: 68px;
}

.grid svg {
  width: 68px;
  height: 68px;
  fill: url(#blue);
  stroke: #357dd6;
  stroke-width: 1;
}

.ln { fill: none; stroke: #3b86df; stroke-width: 4; stroke-linejoin: round; }
.rd { stroke-linecap: round; }
.sq { stroke-linejoin: miter; }
.bold { stroke-width: 5; }
.thick { stroke-width: 6; }
.lt { fill: #7eb8fc; stroke: #5f9fe9; }
.ltl { stroke: #7ab3f8; }
.edge { stroke: #357dd6; }
.wh { fill: none; stroke: #fff; stroke-width: 2; }
.face { fill: #04317f; stroke: none; }

.num {
  fill: #fff;
  stroke: #fff;
  stroke-width: .8px;
  font-family: "Liberation Sans", sans-serif;
  text-anchor: middle;
}

.selected {
  border-radius: 7px;
  background: #ebcdc6;
  box-shadow: inset 0 0 0 2px #ec6646;
}

.next {
  height: 12px;
  border-top: 2px solid #d8d8d8;
  background: #e3e3e3;
}

/* Red frame drawn over the gallery */
.marker {
  position: absolute;
  top: 106px;
  left: 254px;
  width: 148px;
  height: 172px;
  border: 6px solid #ff0008;
  pointer-events: none;
}

/* Slide area */
.work { display: flex; flex: 1; }

.thumbs {
  flex: none;
  width: 17px;
  border-right: 7px solid #f7f7f7;
  background: #e0e0e0;
}

.slide {
  flex: 1;
  min-width: 0;
  overflow: hidden;
  border: solid #c8c8c8;
  border-width: 0 2px;
  background: #fff;
}

.dots { fill: #ff8690; mix-blend-mode: multiply; }

.pane { flex: none; width: 290px; background: #ebebeb; }
```
